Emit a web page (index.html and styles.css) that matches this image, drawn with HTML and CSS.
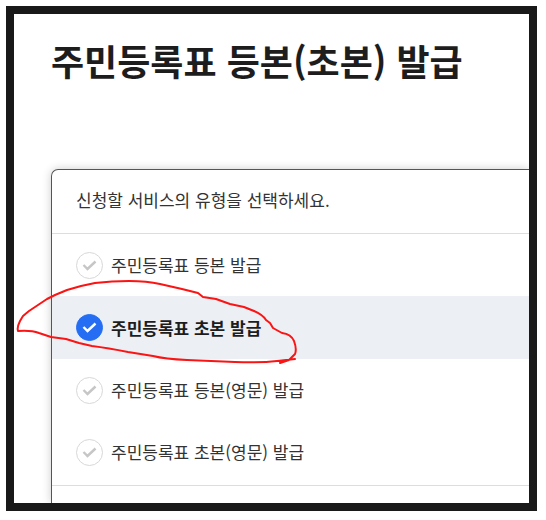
FILE: index.html
```html
<!DOCTYPE html>
<html lang="ko">
<head>
<meta charset="utf-8">
<title>주민등록표 등본(초본) 발급</title>
<link rel="stylesheet" href="styles.css">
</head>
<body>
<main class="frame">
  <h1 class="title">주민등록표 등본(초본) 발급</h1>
  <form class="card">
    <fieldset class="services">
      <legend class="prompt">신청할 서비스의 유형을 선택하세요.</legend>
      <div class="options">
        <label class="option">
          <input class="radio" type="radio" name="service">
          <svg class="check" viewBox="0 0 27 27"><path d="M7.500 13l4 4 8-7.500"/></svg>
          <span>주민등록표 등본 발급</span>
        </label>
        <label class="option option-selected">
          <input class="radio" type="radio" name="service" checked>
          <svg class="check" viewBox="0 0 27 27"><path d="M7.500 13l4 4 8-7.500"/></svg>
          <span>주민등록표 초본 발급</span>
        </label>
        <label class="option">
          <input class="radio" type="radio" name="service">
          <svg class="check" viewBox="0 0 27 27"><path d="M7.500 13l4 4 8-7.500"/></svg>
          <span>주민등록표 등본(영문) 발급</span>
        </label>
        <label class="option">
          <input class="radio" type="radio" name="service">
          <svg class="check" viewBox="0 0 27 27"><path d="M7.500 13l4 4 8-7.500"/></svg>
          <span>주민등록표 초본(영문) 발급</span>
        </label>
      </div>
    </fieldset>
  </form>
  <svg class="marker" viewBox="14 276 288 92" aria-hidden="true">
    <path d="M18 331C17 328 18 325 20 321L23 316L29 311L47 299L55 295L67 290L81 286L95 283Q112 281 129 281Q147 281 160 284L182 289L198 293L203 297L216 299L230 304L244 307L254 311Q263 315 266 320L270 323L273 328L282 333Q291 334 294 341Q297 349 295 354L289 360L280 363M295 359L277 361Q260 363 235 362L187 360Q165 359 153 356L128 352Q108 348 92 346L79 343L66 339L51 337L39 333Q31 330 18 331"/>
  </svg>
</main>
</body>
</html>
```
FILE: styles.css
```css
* {
  box-sizing: border-box;
}

body {
  margin: 0;
  min-height: 100vh;
  padding: 6px 9px 9px 6px;
  display: flex;
  background: #fff;
  color: #333;
  font-family: "Noto Sans CJK KR", sans-serif;
  font-size: 17px;
  line-height: 24px;
}

.frame {
  position: relative;
  flex: 1;
  display: flex;
  flex-direction: column;
  padding: 22px 0 0 37px;
  border: 8px solid #191919;
  background: #fff;
  overflow: hidden;
}

.title {
  margin: 0 0 85px;
  color: #1d1d1d;
  font-size: 36px;
  line-height: 48px;
  font-weight: 700;
  white-space: nowrap;
}

.card {
  flex: 1;
  border: 1px solid #555;
  border-width: 1px 0 0 1px;
  border-top-left-radius: 7px;
  box-shadow: 0 0 10px rgba(0, 0, 0, 0.2);
}

.services {
  min-width: 0;
  margin: 0;
  padding: 0;
  border: 0;
}

.prompt {
  width: 100%;
  padding: 18px 24px 21px;
  border-bottom: 1px solid #ddd;
}

.options {
  padding-bottom: 2px;
  border-bottom: 1px solid #ddd;
}

.option {
  position: relative;
  display: flex;
  align-items: center;
  gap: 8px;
  min-height: 62px;
  padding: 0 24px;
}

.option-selected {
  min-height: 63px;
  background: #eceff4;
  color: #1d1d1d;
  font-weight: 700;
}

.radio {
  appearance: none;
  flex: none;
  width: 27px;
  height: 27px;
  margin: 0;
  border: 1px solid #d8d8d8;
  border-radius: 50%;
  background: #fff;
}

.radio:checked {
  border-color: #256ef4;
  background: #256ef4;
}

.check {
  position: absolute;
  left: 24px;
  width: 27px;
  height: 27px;
  fill: none;
  stroke: #c6c6c6;
  stroke-width: 2.4;
  pointer-events: none;
}

.radio:checked + .check {
  stroke: #fff;
}

.marker {
  position: absolute;
  left: 0;
  top: 262px;
  width: 288px;
  height: 92px;
  fill: none;
  stroke: #fb1414;
  stroke-width: 2;
  stroke-linecap: round;
  stroke-linejoin: round;
  pointer-events: none;
}
```
